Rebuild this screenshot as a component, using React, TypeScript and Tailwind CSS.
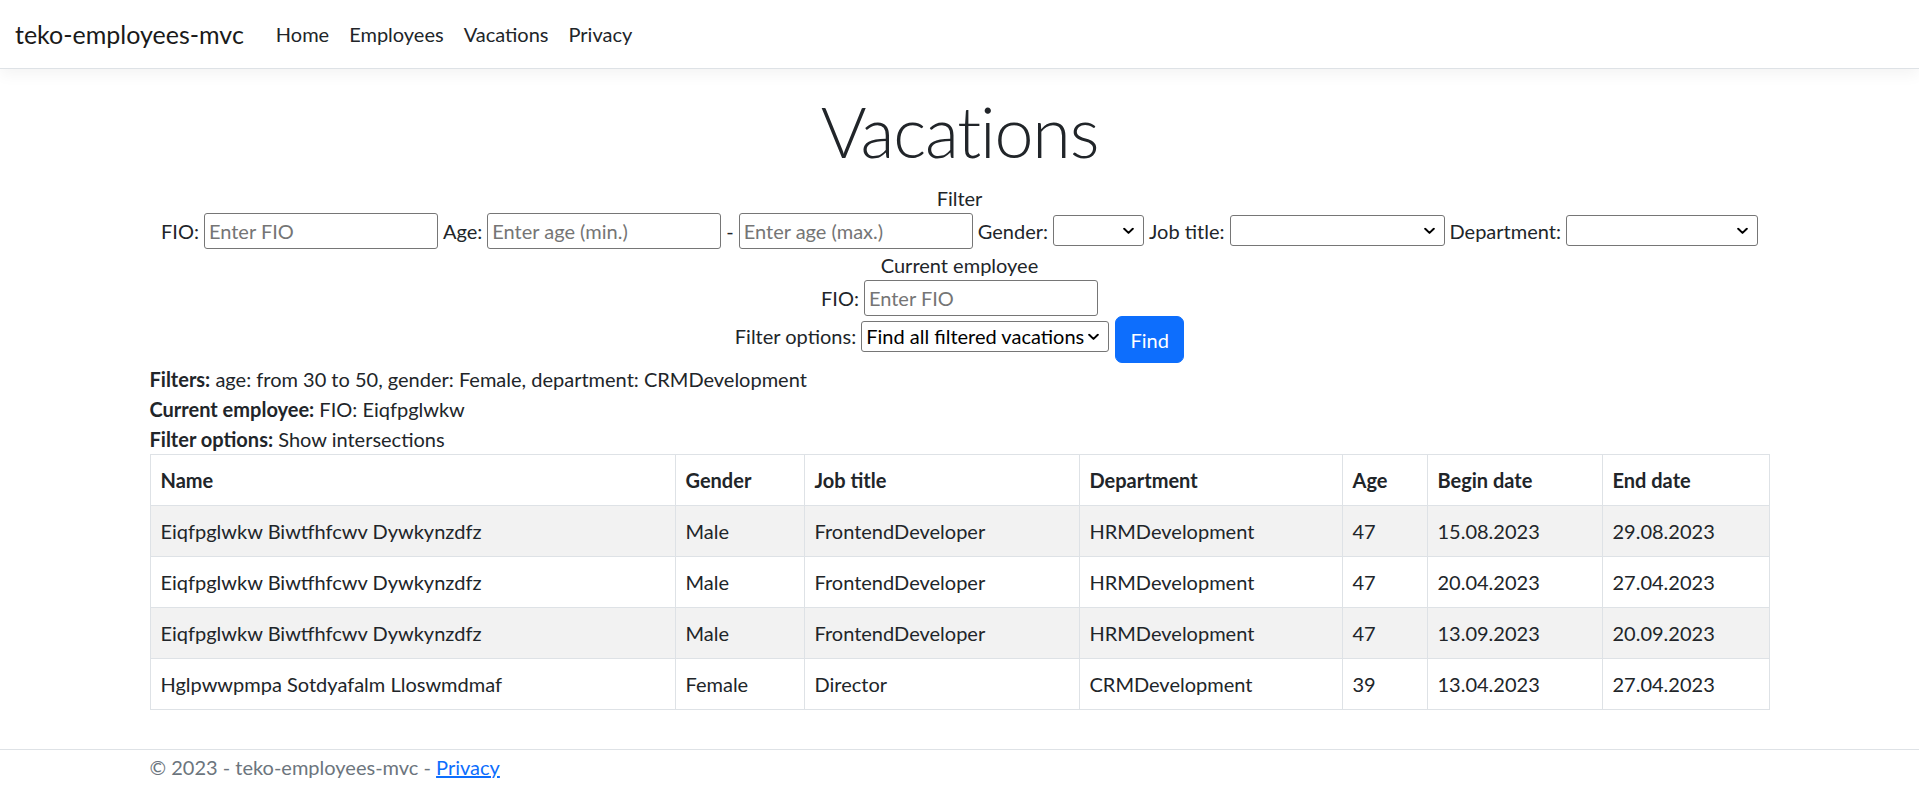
import React from "react";

const Chevron = () => (
  <svg width="11" height="7" viewBox="0 0 11 7" className="absolute right-[9px] top-1/2 -translate-y-1/2">
    <path d="M1.2 1.2 L5.5 5.4 L9.8 1.2" fill="none" stroke="#000" strokeWidth="2" strokeLinecap="round" strokeLinejoin="round" />
  </svg>
);

function Select({ w, value, mt }: { w: string; value?: string; mt: string }) {
  return (
    <div className={`relative h-[31px] ${w} ${mt} shrink-0 rounded-[3px] border border-[#767676] bg-white`}>
      {value ? (
        <span className="absolute left-[4px] top-0 leading-[29px] text-black whitespace-nowrap">{value}</span>
      ) : null}
      <Chevron />
    </div>
  );
}

function TextInput({ placeholder, w }: { placeholder: string; w: string }) {
  return (
    <div className={`h-[36px] ${w} shrink-0 rounded-[3px] border border-[#767676] bg-white px-[4px] leading-[34px] text-[#757575] whitespace-nowrap overflow-hidden`}>
      {placeholder}
    </div>
  );
}

const rows = [
  ["Eiqfpglwkw Biwtfhfcwv Dywkynzdfz", "Male", "FrontendDeveloper", "HRMDevelopment", "47", "15.08.2023", "29.08.2023"],
  ["Eiqfpglwkw Biwtfhfcwv Dywkynzdfz", "Male", "FrontendDeveloper", "HRMDevelopment", "47", "20.04.2023", "27.04.2023"],
  ["Eiqfpglwkw Biwtfhfcwv Dywkynzdfz", "Male", "FrontendDeveloper", "HRMDevelopment", "47", "13.09.2023", "20.09.2023"],
  ["Hglpwwpmpa Sotdyafalm Lloswmdmaf", "Female", "Director", "CRMDevelopment", "39", "13.04.2023", "27.04.2023"],
];

const headers = ["Name", "Gender", "Job title", "Department", "Age", "Begin date", "End date"];

export default function App() {
  return (
    <div className="min-h-[795px] bg-white font-['Lato','Noto_Sans',sans-serif] text-[20px] leading-[30px] text-[#212529]">
      <header>
        <nav className="mb-[20px] flex h-[69px] items-center border-b border-[#dee2e6] bg-white px-[15px] shadow-[0_5px_15px_rgba(0,0,0,0.05)]">
          <span className="mr-[22px] text-[25px] leading-[37px] text-[#1a1a1a]">teko-employees-mvc</span>
          <ul className="flex">
            <li className="px-[10px]">Home</li>
            <li className="px-[10px]">Employees</li>
            <li className="px-[10px]">Vacations</li>
            <li className="px-[10px]">Privacy</li>
          </ul>
        </nav>
      </header>

      <main className="mx-auto w-[1620px]">
        <h1 className="mb-[10px] text-center text-[70px] font-light leading-[84px] tracking-[-1.2px]">Vacations</h1>

        <div className="h-[30px] text-center">Filter</div>

        <div className="flex h-[37px] items-start justify-center gap-[5px]">
          <span className="leading-[36px]">FIO:</span>
          <TextInput placeholder="Enter FIO" w="w-[234px]" />
          <span className="leading-[36px]">Age:</span>
          <TextInput placeholder="Enter age (min.)" w="w-[234px]" />
          <span className="leading-[36px]">-</span>
          <TextInput placeholder="Enter age (max.)" w="w-[234px]" />
          <span className="leading-[36px]">Gender:</span>
          <Select w="w-[91px]" mt="mt-[2px]" />
          <span className="leading-[36px]">Job title:</span>
          <Select w="w-[215px]" mt="mt-[2px]" />
          <span className="leading-[36px]">Department:</span>
          <Select w="w-[192px]" mt="mt-[2px]" />
        </div>

        <div className="h-[30px] text-center">Current employee</div>

        <div className="flex h-[36px] items-start justify-center gap-[5px]">
          <span className="leading-[36px]">FIO:</span>
          <TextInput placeholder="Enter FIO" w="w-[234px]" />
        </div>

        <div className="flex h-[48px] items-start justify-center gap-[5px]">
          <span className="mt-[5px] leading-[31px]">Filter options:</span>
          <Select w="w-[248px]" mt="mt-[5px]" value="Find all filtered vacations" />
          <button className="ml-[1px] h-[47px] w-[69px] rounded-[7px] border border-[#0d6efd] bg-[#0d6efd] text-center leading-[30px] text-white">
            Find
          </button>
        </div>

        <div className="h-[30px]">
          <b className="font-bold">Filters:</b> age: from 30 to 50, gender: Female, department: CRMDevelopment
        </div>
        <div className="h-[30px]">
          <b className="font-bold">Current employee:</b> FIO: Eiqfpglwkw
        </div>
        <div className="h-[30px]">
          <b className="font-bold">Filter options:</b> Show intersections
        </div>

        <table className="w-[1619px] table-fixed border-collapse border border-[#dee2e6]">
          <colgroup>
            <col className="w-[525px]" />
            <col className="w-[129px]" />
            <col className="w-[275px]" />
            <col className="w-[263px]" />
            <col className="w-[85px]" />
            <col className="w-[175px]" />
            <col className="w-[167px]" />
          </colgroup>
          <thead>
            <tr>
              {headers.map((h) => (
                <th key={h} className="border border-[#dee2e6] px-[10px] py-[10px] text-left font-bold leading-[30px]">
                  {h}
                </th>
              ))}
            </tr>
          </thead>
          <tbody>
            {rows.map((r, i) => (
              <tr key={i} className={i % 2 === 0 ? "bg-[#f2f2f2]" : "bg-white"}>
                {r.map((c, j) => (
                  <td key={j} className="border border-[#dee2e6] px-[10px] py-[10px] leading-[30px] whitespace-nowrap">
                    {c}
                  </td>
                ))}
              </tr>
            ))}
          </tbody>
        </table>
      </main>

      <footer className="mt-[39px] border-t border-[#dee2e6]">
        <div className="mx-auto w-[1620px] pt-[2px] leading-[30px] text-[#6c757d] whitespace-nowrap">
          © 2023 - teko-employees-mvc - <a className="text-[#0d6efd] underline">Privacy</a>
        </div>
      </footer>
    </div>
  );
}
